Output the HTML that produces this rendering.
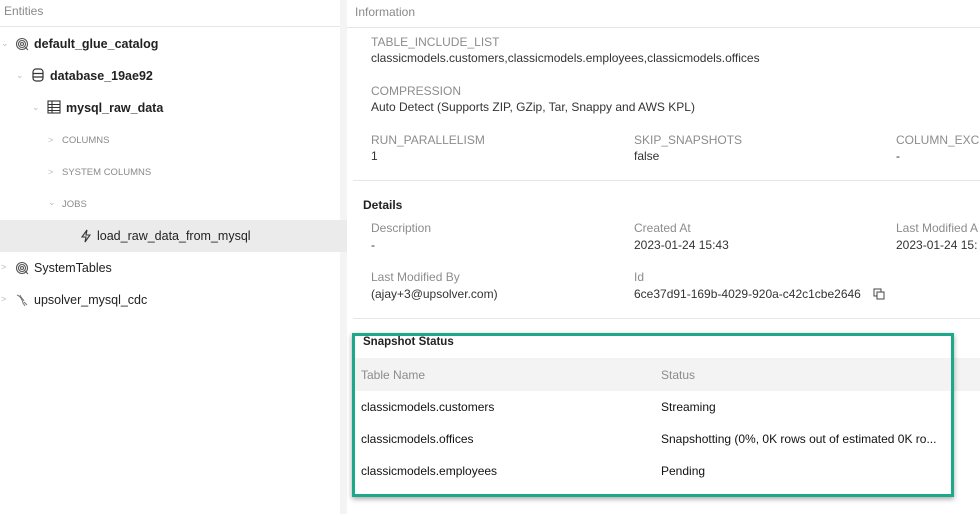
<!DOCTYPE html>
<html><head><meta charset="utf-8"><style>
*{box-sizing:border-box;margin:0;padding:0}
body{width:980px;height:514px;overflow:hidden;background:#fff;font-family:"Liberation Sans",sans-serif;position:relative;color:#333}
.abs{position:absolute;white-space:nowrap}
.left{position:absolute;left:0;top:0;width:340px;height:514px}
.gap{position:absolute;left:340px;top:0;width:7px;height:514px;background:#f4f4f4}
.right{position:absolute;left:0;top:0;width:980px;height:514px;overflow:hidden}
.hdr{font-size:12px;color:#8a8a8a}
.line{position:absolute;height:1px;background:#e6e6e6}
.node{font-size:12.5px;color:#222}
.b{font-weight:bold}
.small{font-size:9.5px;color:#8a8a8a}
.chev{font-size:9px;color:#bbb}
.lab{font-size:12px;color:#8c8c8c}
.val{font-size:12px;color:#333}
.tbl{font-size:12px;color:#111}
</style></head><body>
<div class="gap"></div>
<div class="abs" style="left:0;top:220px;width:347px;height:32px;background:#ebebeb"></div>
<div class="left">
<div class="abs hdr" style="left:4px;top:4px">Entities</div>
<div class="line" style="left:0;top:26px;width:340px"></div>
<div class="abs chev" style="left:1px;top:38px">&#8964;</div>
<svg class="abs" style="left:15px;top:37px" width="14" height="14" viewBox="0 0 14 14" fill="none" stroke="#555" stroke-width="1.1"><circle cx="7" cy="7" r="5.5"/><circle cx="7" cy="7" r="3.5"/><circle cx="7" cy="7" r="1.5"/><path d="M10 10l3 3"/></svg>
<div class="abs node b" style="left:34px;top:37px">default_glue_catalog</div>
<div class="abs chev" style="left:16px;top:70px">&#8964;</div>
<svg class="abs" style="left:32px;top:68px" width="12" height="14" viewBox="0 0 12 14" fill="none" stroke="#333" stroke-width="1.2"><rect x="1" y="1" width="10" height="12" rx="3"/><path d="M1 5.5h10M1 9h10"/></svg>
<div class="abs node b" style="left:50px;top:69px">database_19ae92</div>
<div class="abs chev" style="left:32px;top:102px">&#8964;</div>
<svg class="abs" style="left:47px;top:100px" width="14" height="14" viewBox="0 0 14 14" fill="none" stroke="#333" stroke-width="1.1"><rect x="1" y="1" width="12" height="12"/><path d="M1 4.5h12M1 7.5h12M1 10.5h12M5 1v12"/></svg>
<div class="abs node b" style="left:66px;top:101px">mysql_raw_data</div>
<div class="abs chev" style="left:48px;top:135px">&gt;</div>
<div class="abs small" style="left:62px;top:135px">COLUMNS</div>
<div class="abs chev" style="left:48px;top:167px">&gt;</div>
<div class="abs small" style="left:62px;top:167px">SYSTEM COLUMNS</div>
<div class="abs chev" style="left:48px;top:197px">&#8964;</div>
<div class="abs small" style="left:62px;top:199px">JOBS</div>
<svg class="abs" style="left:80px;top:229px" width="11" height="14" viewBox="0 0 11 14" fill="none" stroke="#333" stroke-width="1.1"><path d="M7 1L2 8h4l-1 5 5-7H6l1-5z"/></svg>
<div class="abs node" style="left:97px;top:229px">load_raw_data_from_mysql</div>
<div class="abs chev" style="left:1px;top:262px">&gt;</div>
<svg class="abs" style="left:15px;top:261px" width="14" height="14" viewBox="0 0 14 14" fill="none" stroke="#555" stroke-width="1.1"><circle cx="7" cy="7" r="5.5"/><circle cx="7" cy="7" r="3.5"/><circle cx="7" cy="7" r="1.5"/><path d="M10 10l3 3"/></svg>
<div class="abs node" style="left:34px;top:261px">SystemTables</div>
<div class="abs chev" style="left:1px;top:294px">&gt;</div>
<svg class="abs" style="left:15px;top:293px" width="14" height="14" viewBox="0 0 14 14" fill="none" stroke="#777" stroke-width="1"><path d="M2 2c3 1 5 4 6 8l2 3M5 2c1 3 3 4 4 6M9 9l3 3"/></svg>
<div class="abs node" style="left:34px;top:293px">upsolver_mysql_cdc</div>
</div>
<div class="right">
<div class="abs hdr" style="left:355px;top:5px">Information</div>
<div class="line" style="left:347px;top:27px;width:633px"></div>
<div class="abs lab" style="left:371px;top:35px">TABLE_INCLUDE_LIST</div>
<div class="abs val" style="left:371px;top:51px">classicmodels.customers,classicmodels.employees,classicmodels.offices</div>
<div class="abs lab" style="left:371px;top:84px">COMPRESSION</div>
<div class="abs val" style="left:371px;top:100px">Auto Detect (Supports ZIP, GZip, Tar, Snappy and AWS KPL)</div>
<div class="abs lab" style="left:371px;top:133px">RUN_PARALLELISM</div>
<div class="abs val" style="left:371px;top:149px">1</div>
<div class="abs lab" style="left:634px;top:133px">SKIP_SNAPSHOTS</div>
<div class="abs val" style="left:634px;top:149px">false</div>
<div class="abs lab" style="left:896px;top:133px">COLUMN_EXC</div>
<div class="abs val" style="left:896px;top:149px">-</div>
<div class="line" style="left:353px;top:180px;width:627px"></div>
<div class="abs b" style="left:363px;top:198px;font-size:12px;color:#222">Details</div>
<div class="abs lab" style="left:371px;top:221px">Description</div>
<div class="abs val" style="left:371px;top:238px">-</div>
<div class="abs lab" style="left:634px;top:221px">Created At</div>
<div class="abs val" style="left:634px;top:238px">2023-01-24 15:43</div>
<div class="abs lab" style="left:896px;top:221px">Last Modified A</div>
<div class="abs val" style="left:896px;top:238px">2023-01-24 15:</div>
<div class="abs lab" style="left:371px;top:270px">Last Modified By</div>
<div class="abs val" style="left:371px;top:287px">(ajay+3@upsolver.com)</div>
<div class="abs lab" style="left:634px;top:270px">Id</div>
<div class="abs val" style="left:634px;top:287px">6ce37d91-169b-4029-920a-c42c1cbe2646</div>
<svg class="abs" style="left:873px;top:288px" width="12" height="12" viewBox="0 0 12 12" fill="none" stroke="#444" stroke-width="1"><rect x="1" y="1" width="7" height="7"/><rect x="4" y="4" width="7" height="7" fill="#fff"/></svg>
<div class="line" style="left:353px;top:318px;width:627px"></div>
<div class="abs" style="left:353px;top:358px;width:627px;height:33px;background:#f3f3f3"></div>
<div class="abs b" style="left:363px;top:336px;font-size:11.5px;color:#222">Snapshot Status</div>
<div class="abs lab" style="left:361px;top:368px">Table Name</div>
<div class="abs lab" style="left:661px;top:368px">Status</div>
<div class="abs tbl" style="left:361px;top:400px">classicmodels.customers</div>
<div class="abs tbl" style="left:661px;top:400px">Streaming</div>
<div class="abs tbl" style="left:361px;top:432px">classicmodels.offices</div>
<div class="abs tbl" style="left:661px;top:432px">Snapshotting (0%, 0K rows out of estimated 0K ro...</div>
<div class="abs tbl" style="left:361px;top:464px">classicmodels.employees</div>
<div class="abs tbl" style="left:661px;top:464px">Pending</div>
<div class="abs" style="left:352px;top:333px;width:602px;height:164px;border:3px solid #1ba98a;box-shadow:0 2px 5px rgba(0,0,0,.35)"></div>
</div>
</body></html>
